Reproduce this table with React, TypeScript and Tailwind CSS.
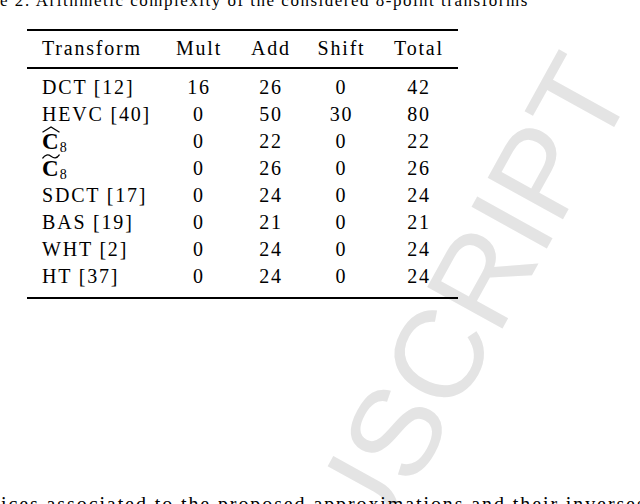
import React from "react";

const rows: { name: string; mult: string; add: string; shift: string; total: string }[] = [
  { name: "DCT [12]", mult: "16", add: "26", shift: "0", total: "42" },
  { name: "HEVC [40]", mult: "0", add: "50", shift: "30", total: "80" },
  { name: "hat", mult: "0", add: "22", shift: "0", total: "22" },
  { name: "tilde", mult: "0", add: "26", shift: "0", total: "26" },
  { name: "SDCT [17]", mult: "0", add: "24", shift: "0", total: "24" },
  { name: "BAS [19]", mult: "0", add: "21", shift: "0", total: "21" },
  { name: "WHT [2]", mult: "0", add: "24", shift: "0", total: "24" },
  { name: "HT [37]", mult: "0", add: "24", shift: "0", total: "24" },
];

function AccentC({ kind }: { kind: "hat" | "tilde" }) {
  return (
    <span className="inline-flex items-baseline">
      <span className="relative inline-block font-bold text-[23px] tracking-[0px]">
        C
        <svg
          className="absolute left-[0px] top-[-2px]"
          width="18"
          height="7"
          viewBox="0 0 18 7"
          fill="none"
        >
          {kind === "hat" ? (
            <path d="M0.5 6.2 L9 1 L17.5 6.2" stroke="#000" strokeWidth="1.2" />
          ) : (
            <path d="M0.5 5.5 C3 1.5, 6 1, 9 3.2 S14.5 6, 17.5 1.5" stroke="#000" strokeWidth="1.3" />
          )}
        </svg>
      </span>
      <span className="relative top-[3px] ml-[1px] text-[14px] tracking-[0.5px]">8</span>
    </span>
  );
}

function Row({ cells }: { cells: React.ReactNode[] }) {
  return (
    <div className="grid grid-cols-[132px_80px_64px_77px_78px] h-[27px] leading-[27px]">
      <div className="pl-[15px] whitespace-nowrap">{cells[0]}</div>
      <div className="text-center">{cells[1]}</div>
      <div className="text-center">{cells[2]}</div>
      <div className="text-center">{cells[3]}</div>
      <div className="text-center">{cells[4]}</div>
    </div>
  );
}

export default function App() {
  return (
    <div
      className="relative isolate w-[640px] h-[504px] overflow-hidden bg-white text-black"
      style={{ fontFamily: '"Liberation Serif", "Times New Roman", serif' }}
    >
      <div
        className="absolute z-0 left-[-112px] top-[1331px] origin-[0_106px] rotate-[-61deg] whitespace-nowrap text-[125px] leading-none text-[#e4e4e4]"
        style={{ fontFamily: '"Liberation Sans", Arial, sans-serif' }}
      >
        ACCEPTED MANUSCRIPT
      </div>

      <div className="relative z-10 flex flex-col h-full">
        <p className="h-[17px] leading-[17px] text-[17px] tracking-[1.5px] mt-[-8px] ml-[-36px] whitespace-nowrap">
          Table 2: Arithmetic complexity of the considered 8-point transforms
        </p>

        <div className="mt-[20px] ml-[27px] w-[431px] text-[20px] tracking-[1.8px]">
          <div className="h-[2px] bg-black" />
          <div className="mt-[4px]">
            <Row cells={["Transform", "Mult", "Add", "Shift", "Total"]} />
          </div>
          <div className="mt-[5px] h-[2px] bg-black" />
          <div className="mt-[5px]">
            {rows.map((r, i) => (
              <Row
                key={i}
                cells={[
                  r.name === "hat" ? <AccentC kind="hat" /> : r.name === "tilde" ? <AccentC kind="tilde" /> : r.name,
                  r.mult,
                  r.add,
                  r.shift,
                  r.total,
                ]}
              />
            ))}
          </div>
          <div className="mt-[7px] h-[2px] bg-black" />
        </div>

        <p className="mt-auto mb-[-10px] ml-[1px] h-[20px] leading-[20px] text-[20px] tracking-[1.9px] whitespace-nowrap">
          ices associated to the proposed approximations and their inverses
        </p>
      </div>
    </div>
  );
}
